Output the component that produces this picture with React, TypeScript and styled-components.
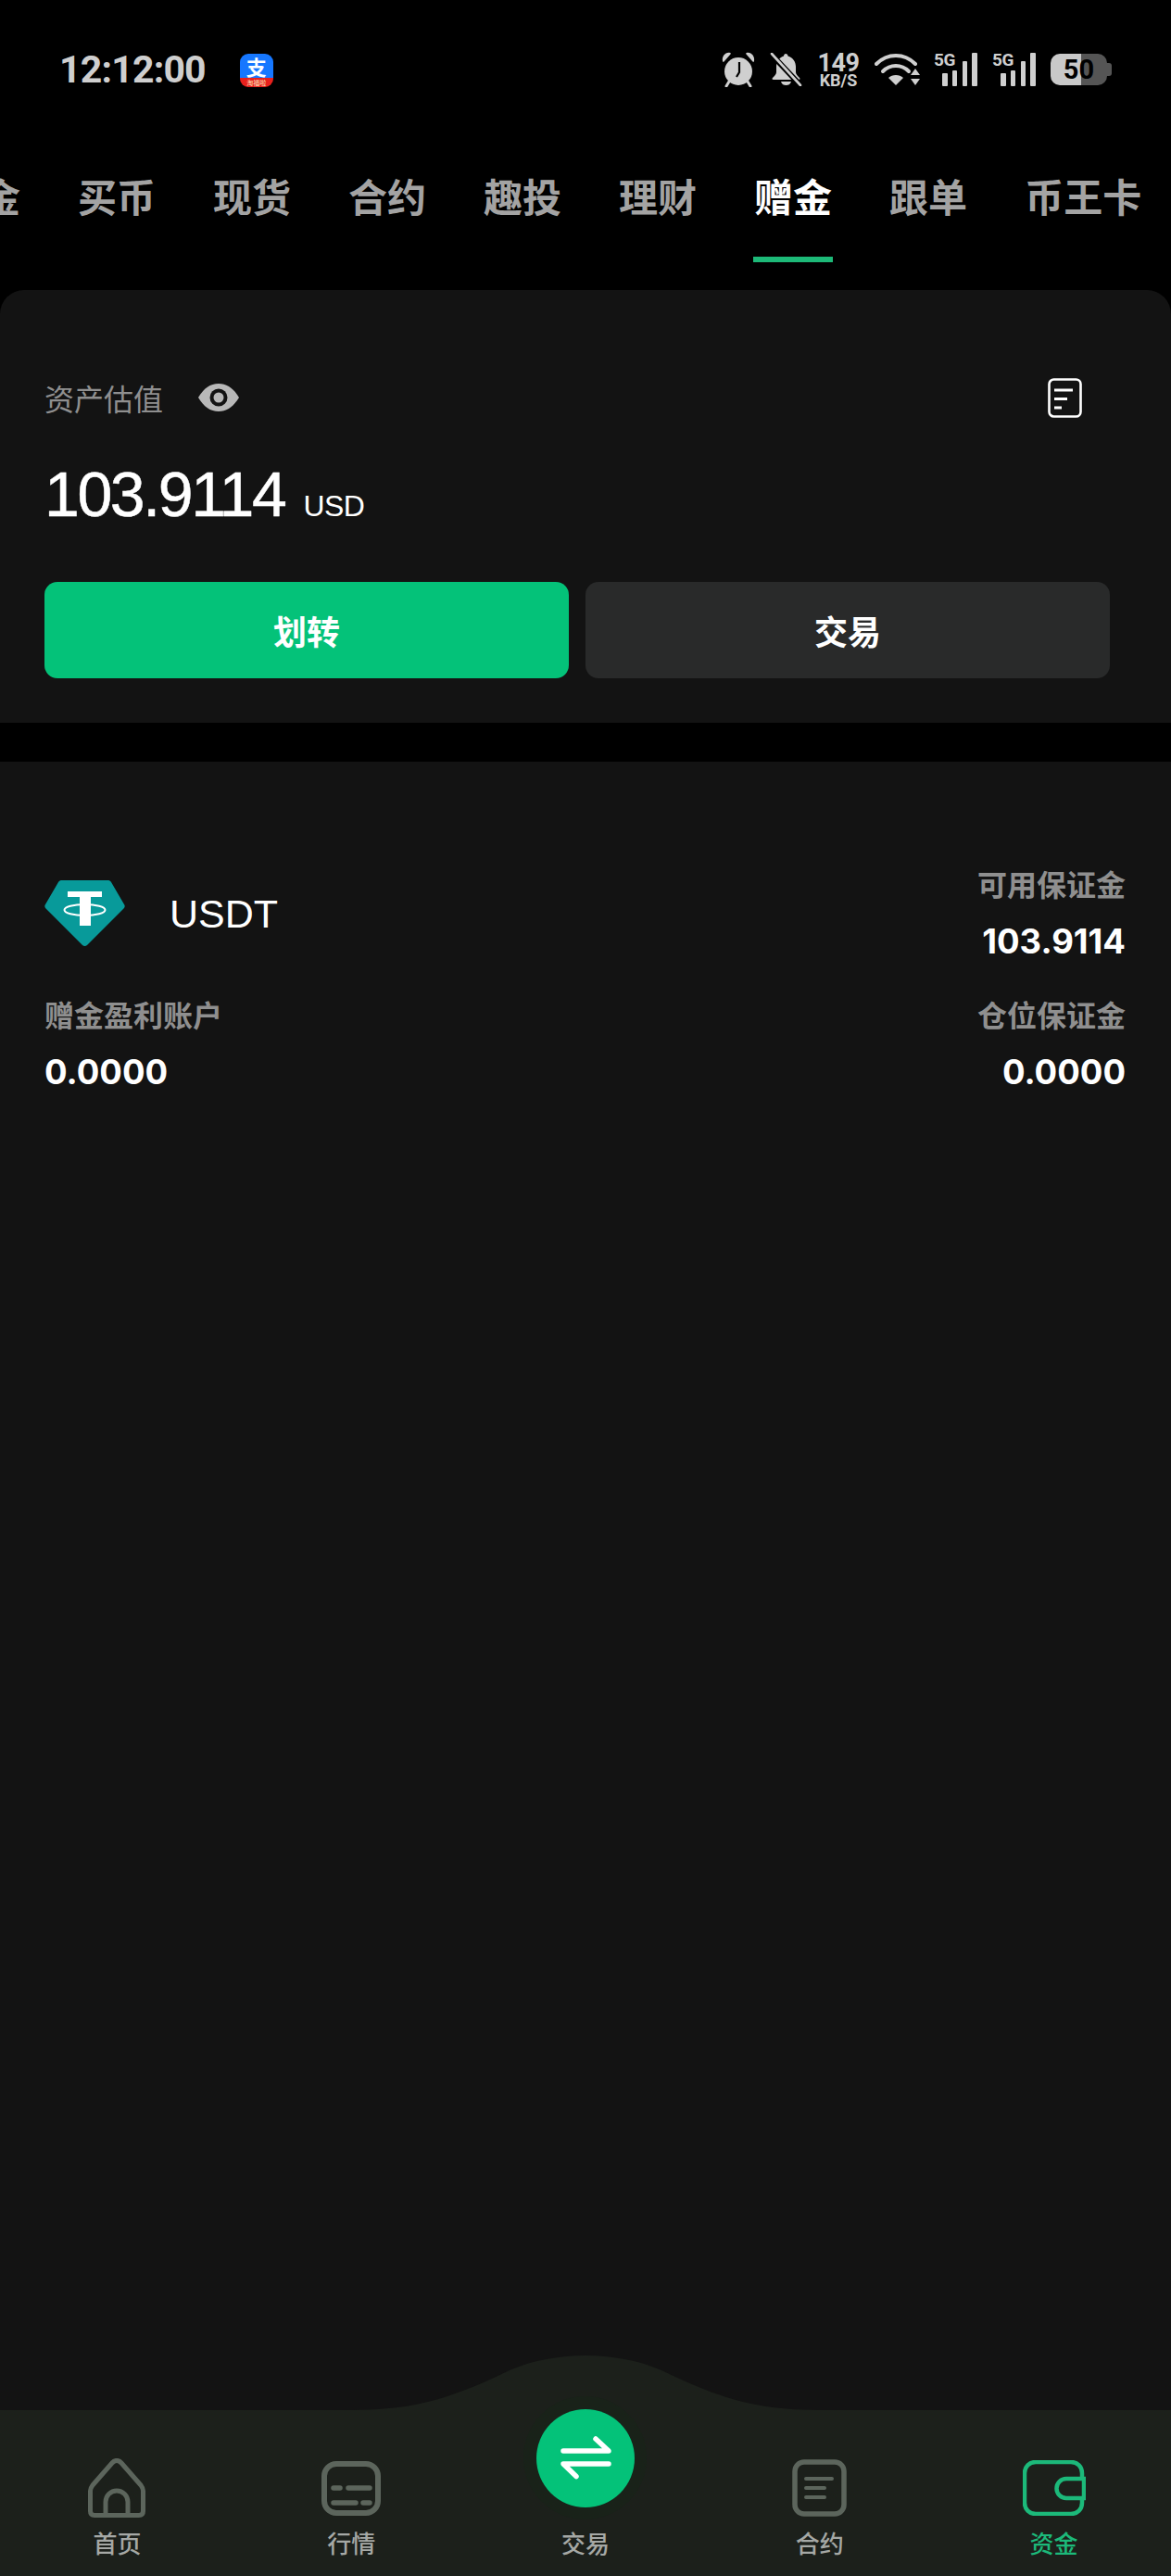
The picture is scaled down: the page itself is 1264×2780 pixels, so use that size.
import styled, { createGlobalStyle } from "styled-components";

const tabs = ["资金", "买币", "现货", "合约", "趣投", "理财", "赠金", "跟单", "币王卡"];

const GlobalStyle = createGlobalStyle`
  html, body {
    margin: 0;
    padding: 0;
    background: #000;
  }
  body {
    font-family: "Liberation Sans", "Noto Sans CJK SC", sans-serif;
  }
`;

export default function App() {
  return (
    <Page>
      <GlobalStyle />
      <StatusBar>
        <StatusLeft>
          <Clock>12:12:00</Clock>
          <AlipayBadge>
            <AlipayGlyph>支</AlipayGlyph>
            <AlipayStrip>淘福啦</AlipayStrip>
          </AlipayBadge>
        </StatusLeft>
        <StatusRight>
          <svg width="36" height="38" viewBox="0 0 36 38" fill="#cfcfcf">
            <path d="M1 10C0 5 4 0 9 1c1 0 1 1 .5 1.500L2.500 10.500C2 11 1 11 1 10Z" />
            <path d="M35 10c1-5-3-10-8-9-1 0-1 1-.5 1.500l7 8c.5.5 1.500.5 1.500-.5Z" />
            <circle cx="18" cy="21" r="15" />
            <path d="M8 32 5 37M28 32l3 5" stroke="#cfcfcf" strokeWidth="3" strokeLinecap="round" />
            <path d="M19 11v11l-3 5" stroke="#000" strokeWidth="2.200" fill="none" />
          </svg>
          <svg width="35" height="36" viewBox="0 0 35 36" fill="#cfcfcf">
            <path d="M17 1c1.500 0 2.500 1 2.500 2.500C25 5 28 10 28 15v6c0 2 2 4 4 6 1 1 .5 2-1 2H4c-1.500 0-2-1-1-2 2-2 4-4 4-6v-6c0-5 3-10 8-11.500C15 2 16 1 17 1Z" />
            <path d="M12 31h11c-1 3-3 4-5.500 4S13 34 12 31Z" />
            <path d="M2 2l31 33" stroke="#000" strokeWidth="6" />
            <path d="M2 1l31 34" stroke="#cfcfcf" strokeWidth="2.600" strokeLinecap="round" />
          </svg>
          <Speed>
            <SpeedValue>149</SpeedValue>
            <SpeedUnit>KB/S</SpeedUnit>
          </Speed>
          <WifiIcon width="50" height="36" viewBox="0 0 50 36" fill="none" stroke="#cfcfcf" strokeLinecap="round">
            <path d="M2 12C14 0 32 0 44 12" strokeWidth="4" />
            <path d="M9 20c8-8 20-8 28 0" strokeWidth="4" />
            <path d="M23 35l-8-8c4-4 12-4 16 0Z" fill="#cfcfcf" stroke="none" />
            <path d="M44 17l5 7H39ZM44 35l-5-7h10Z" fill="#cfcfcf" stroke="none" />
          </WifiIcon>
          <Signal>
            <SignalLabel>5G</SignalLabel>
            <Bar $h={14} />
            <Bar $h={17} />
            <Bar $h={27} />
            <Bar $h={36} />
          </Signal>
          <Signal>
            <SignalLabel>5G</SignalLabel>
            <Bar $h={14} />
            <Bar $h={17} />
            <Bar $h={27} />
            <Bar $h={36} />
          </Signal>
          <Battery>50</Battery>
        </StatusRight>
      </StatusBar>

      <TabViewport>
        <TabStrip>
          {tabs.map((t) => (
            <Tab key={t} $active={t === "赠金"}>
              {t}
            </Tab>
          ))}
        </TabStrip>
      </TabViewport>

      <AssetCard>
        <AssetHead>
          <AssetLabelRow>
            <AssetLabel>资产估值</AssetLabel>
            <svg width="44" height="30" viewBox="0 0 44 30">
              <path d="M0 15C6 5 13 0 22 0s16 5 22 15c-6 10-13 15-22 15S6 25 0 15Z" fill="#b8b8b8" />
              <circle cx="22" cy="15" r="9.500" fill="#131313" />
              <circle cx="22" cy="15" r="5.500" fill="#b8b8b8" />
            </svg>
          </AssetLabelRow>
          <RecordIcon width="37" height="43" viewBox="0 0 37 43" fill="none" stroke="#fff">
            <rect x="1.500" y="1.500" width="34" height="40" rx="5" strokeWidth="2.600" />
            <path d="M7 13h20M7 22.500h14M7 32h8" strokeWidth="3" />
          </RecordIcon>
        </AssetHead>
        <AmountRow>
          <Amount>103.9114</Amount>
          <Currency>USD</Currency>
        </AmountRow>
        <Actions>
          <ActionButton $primary>划转</ActionButton>
          <ActionButton>交易</ActionButton>
        </Actions>
      </AssetCard>

      <AccountPanel>
        <AccountGrid>
          <CoinRow>
            <svg width="87" height="71" viewBox="0 0 87 71">
              <path
                d="M19 0h49c2 0 3 .5 4 2l14 24c1 1.500 1 3-.5 4.500L46 70c-1.500 1.300-3.500 1.300-5 0L1.500 30.500C0 29 0 27.500 1 26L15 2c1-1.500 2-2 4-2Z"
                fill="#089a9a"
              />
              <path d="M25 12h37v6H50v31H38V18H25Z" fill="#fff" />
              <ellipse cx="43.500" cy="32" rx="22" ry="6" fill="none" stroke="#fff" strokeWidth="2" />
            </svg>
            <CoinName>USDT</CoinName>
          </CoinRow>
          <Stat $right>
            <StatLabel>可用保证金</StatLabel>
            <StatValue>103.9114</StatValue>
          </Stat>
          <Stat>
            <StatLabel>赠金盈利账户</StatLabel>
            <StatValue>0.0000</StatValue>
          </Stat>
          <Stat $right>
            <StatLabel>仓位保证金</StatLabel>
            <StatValue>0.0000</StatValue>
          </Stat>
        </AccountGrid>
      </AccountPanel>

      <BottomNav>
        <Hump width="544" height="60" viewBox="0 0 544 60">
          <path
            d="M20 60V59C90 59 130 45 190 16 215 5 245 0 272 0s57 5 82 16c60 29 100 43 170 43v1Z"
            fill="#1c201b"
          />
        </Hump>
        <NavItem>
          <NavIcon>
            <svg width="62" height="64" viewBox="0 0 62 64" fill="none" stroke="#5c655c" strokeWidth="5" strokeLinejoin="round">
              <path d="M26 5c3-3.500 7-3.500 10 0l21 24c1.500 2 2.500 3.500 2.500 6v22c0 3-1.500 4.500-4.500 4.500H7c-3 0-4.500-1.500-4.500-4.500V35c0-2.500 1-4 2.500-6Z" />
              <path d="M19 61V47a12 12 0 0 1 24 0v14" />
            </svg>
          </NavIcon>
          <NavLabel>首页</NavLabel>
        </NavItem>
        <NavItem>
          <NavIcon>
            <svg width="64" height="59" viewBox="0 0 64 59" fill="none" stroke="#5c655c" strokeLinecap="round">
              <rect x="3" y="3" width="58" height="53" rx="13" strokeWidth="6" />
              <path d="M13 29h7M29 29h23M13 45h24M45 45h7" strokeWidth="5.500" />
            </svg>
          </NavIcon>
          <NavLabel>行情</NavLabel>
        </NavItem>
        <NavItem>
          <TradeHalo>
            <TradeButton>
              <svg width="106" height="106" viewBox="0 0 106 106" fill="none" stroke="#fff" strokeWidth="5.500" strokeLinecap="round" strokeLinejoin="round">
                <path d="M29 45h49L64 32" />
                <path d="M78 59H29l14 13.500" />
              </svg>
            </TradeButton>
          </TradeHalo>
          <NavLabel>交易</NavLabel>
        </NavItem>
        <NavItem>
          <NavIcon>
            <svg width="59" height="62" viewBox="0 0 59 62" fill="none" stroke="#5c655c" strokeLinecap="round">
              <rect x="3" y="3" width="53" height="56" rx="10" strokeWidth="5.500" />
              <path d="M15 21h28M15 31h20M15 41h20" strokeWidth="4" />
            </svg>
          </NavIcon>
          <NavLabel>合约</NavLabel>
        </NavItem>
        <NavItem>
          <NavIcon>
            <svg width="68" height="60" viewBox="0 0 68 60" fill="none" stroke="#1cb97a" strokeWidth="4.500">
              <path d="M64 19v-5C64 7 59 2 52 2H14C7 2 2 7 2 14v32c0 7 5 12 12 12h38c7 0 12-5 12-12v-5" />
              <path d="M66 20H47a10.500 10.500 0 0 0 0 21h19Z" />
            </svg>
          </NavIcon>
          <NavLabel $active>资金</NavLabel>
        </NavItem>
      </BottomNav>
    </Page>
  );
}

const Page = styled.div`
  width: 1264px;
  height: 2780px;
  background: #000;
  display: flex;
  flex-direction: column;
  overflow: hidden;
`;

const StatusBar = styled.div`
  height: 150px;
  box-sizing: border-box;
  padding: 0 64px;
  display: flex;
  align-items: center;
  justify-content: space-between;
`;

const StatusLeft = styled.div`
  display: flex;
  align-items: center;
  gap: 37px;
`;

const Clock = styled.div`
  font-family: Roboto, "Liberation Sans", sans-serif;
  font-weight: 700;
  font-size: 41px;
  line-height: 48px;
  letter-spacing: -0.8px;
  color: #cfcfcf;
`;

const AlipayBadge = styled.div`
  width: 36px;
  height: 36px;
  margin-top: 2px;
  display: flex;
  flex-direction: column;
  align-items: stretch;
`;

const AlipayGlyph = styled.div`
  height: 26px;
  border-radius: 9px 9px 0 0;
  background: #1677ff;
  font-family: "Noto Sans CJK SC", sans-serif;
  font-weight: 700;
  font-size: 22px;
  line-height: 26px;
  text-align: center;
  color: #fff;
`;

const AlipayStrip = styled.div`
  height: 10px;
  border-radius: 0 0 9px 9px;
  background: #e8201c;
  font-family: "Noto Sans CJK SC", sans-serif;
  font-size: 7px;
  line-height: 10px;
  text-align: center;
  color: #ffe9c0;
`;

const StatusRight = styled.div`
  display: flex;
  align-items: center;
  gap: 16px;
`;

const WifiIcon = styled.svg`
  margin-right: -2px;
`;

const Speed = styled.div`
  width: 46px;
  display: flex;
  flex-direction: column;
  align-items: center;
  font-family: Roboto, sans-serif;
  font-weight: 700;
  color: #cfcfcf;
`;

const SpeedValue = styled.div`
  font-size: 27px;
  line-height: 22px;
  letter-spacing: -0.5px;
`;

const SpeedUnit = styled.div`
  font-size: 18px;
  line-height: 15px;
`;

const Signal = styled.div`
  position: relative;
  width: 47px;
  height: 36px;
  box-sizing: border-box;
  padding-left: 9px;
  display: flex;
  align-items: flex-end;
  justify-content: space-between;
`;

const SignalLabel = styled.span`
  position: absolute;
  left: 0;
  top: -1px;
  font-family: Roboto, sans-serif;
  font-weight: 700;
  font-size: 19px;
  line-height: 18px;
  letter-spacing: -0.5px;
  color: #cfcfcf;
`;

const Bar = styled.span<{ $h: number }>`
  width: 5.5px;
  height: ${(p) => p.$h}px;
  border-radius: 1px;
  background: #cfcfcf;
`;

const Battery = styled.div`
  position: relative;
  width: 61px;
  height: 34px;
  margin-right: 5px;
  border-radius: 10px;
  background: linear-gradient(90deg, #c9c9c9 0 54%, #555 54% 100%);
  display: flex;
  align-items: center;
  justify-content: center;
  font-family: Roboto, sans-serif;
  font-weight: 700;
  font-size: 29px;
  color: #000;

  &::after {
    content: "";
    position: absolute;
    right: -5px;
    top: 10px;
    width: 5px;
    height: 14px;
    border-radius: 0 3px 3px 0;
    background: #555;
  }
`;

const TabViewport = styled.div`
  height: 133px;
  overflow: hidden;
`;

const TabStrip = styled.div`
  display: flex;
  gap: 62px;
  margin-left: -62px;
`;

const Tab = styled.div<{ $active?: boolean }>`
  position: relative;
  flex: none;
  height: 133px;
  box-sizing: border-box;
  padding-top: 36px;
  font-family: "Noto Sans CJK SC", sans-serif;
  font-weight: 700;
  font-size: 42px;
  line-height: 50px;
  color: ${(p) => (p.$active ? "#fff" : "#a3a3a3")};

  &::after {
    content: "";
    display: ${(p) => (p.$active ? "block" : "none")};
    position: absolute;
    left: -1px;
    right: -1px;
    bottom: 0;
    height: 6px;
    background: #1db978;
  }
`;

const AssetCard = styled.div`
  margin-top: 30px;
  padding: 94px 66px 48px 48px;
  background: #131313;
  border-radius: 26px 26px 0 0;
`;

const AssetHead = styled.div`
  display: flex;
  align-items: center;
  justify-content: space-between;
`;

const AssetLabelRow = styled.div`
  display: flex;
  align-items: center;
  gap: 38px;
`;

const AssetLabel = styled.div`
  font-family: "Noto Sans CJK SC", sans-serif;
  font-size: 32px;
  line-height: 44px;
  color: #8f8f8f;
`;

const RecordIcon = styled.svg`
  margin-right: 30px;
`;

const AmountRow = styled.div`
  margin: 42px 0 55px;
  display: flex;
  align-items: baseline;
  gap: 20px;
  color: #fff;
`;

const Amount = styled.div`
  font-size: 68px;
  line-height: 80px;
  letter-spacing: -2.4px;
  -webkit-text-stroke: 0.5px #fff;
`;

const Currency = styled.div`
  font-size: 32px;
  letter-spacing: -0.5px;
`;

const Actions = styled.div`
  display: grid;
  grid-template-columns: 1fr 1fr;
  gap: 18px;
`;

const ActionButton = styled.div<{ $primary?: boolean }>`
  height: 104px;
  border-radius: 14px;
  background: ${(p) => (p.$primary ? "#04c279" : "#292a2a")};
  display: flex;
  align-items: center;
  justify-content: center;
  font-family: "Noto Sans CJK SC", sans-serif;
  font-weight: 700;
  font-size: 36px;
  color: #fff;
`;

const AccountPanel = styled.div`
  flex: 1;
  margin-top: 42px;
  padding: 111px 49px 0 48px;
  background: #131313;
`;

const AccountGrid = styled.div`
  display: grid;
  grid-template-columns: 1fr 1fr;
  row-gap: 36px;
`;

const CoinRow = styled.div`
  display: flex;
  align-items: center;
  gap: 48px;
`;

const CoinName = styled.div`
  font-size: 43px;
  line-height: 50px;
  color: #fff;
`;

const Stat = styled.div<{ $right?: boolean }>`
  display: flex;
  flex-direction: column;
  gap: 21px;
  align-items: ${(p) => (p.$right ? "flex-end" : "flex-start")};
`;

const StatLabel = styled.div`
  font-family: "Noto Sans CJK SC", sans-serif;
  font-weight: 700;
  font-size: 32px;
  line-height: 40px;
  color: #8f8f8f;
`;

const StatValue = styled.div`
  font-family: Inter, sans-serif;
  font-weight: 700;
  font-size: 36.5px;
  line-height: 44px;
  color: #fff;
`;

const BottomNav = styled.div`
  position: relative;
  height: 179px;
  box-sizing: border-box;
  padding-bottom: 21px;
  background: #1c201b;
  display: grid;
  grid-template-columns: repeat(5, 1fr);
  align-items: end;
  align-content: end;
`;

const Hump = styled.svg`
  position: absolute;
  left: 360px;
  top: -59px;
`;

const NavItem = styled.div`
  position: relative;
  display: flex;
  flex-direction: column;
  align-items: center;
`;

const NavIcon = styled.div`
  height: 64px;
  margin-bottom: 12px;
  display: flex;
  align-items: center;
  justify-content: center;
`;

const TradeHalo = styled.div`
  width: 133px;
  height: 133px;
  margin-bottom: 10px;
  border-radius: 50%;
  background: #192219;
  display: flex;
  align-items: center;
  justify-content: center;
`;

const TradeButton = styled.div`
  width: 106px;
  height: 106px;
  border-radius: 50%;
  background: #04c279;
  display: flex;
`;

const NavLabel = styled.div<{ $active?: boolean }>`
  font-family: "Noto Sans CJK SC", sans-serif;
  font-weight: 500;
  font-size: 26px;
  line-height: 30px;
  color: ${(p) => (p.$active ? "#1cb97a" : "#a5a8a5")};
`;
